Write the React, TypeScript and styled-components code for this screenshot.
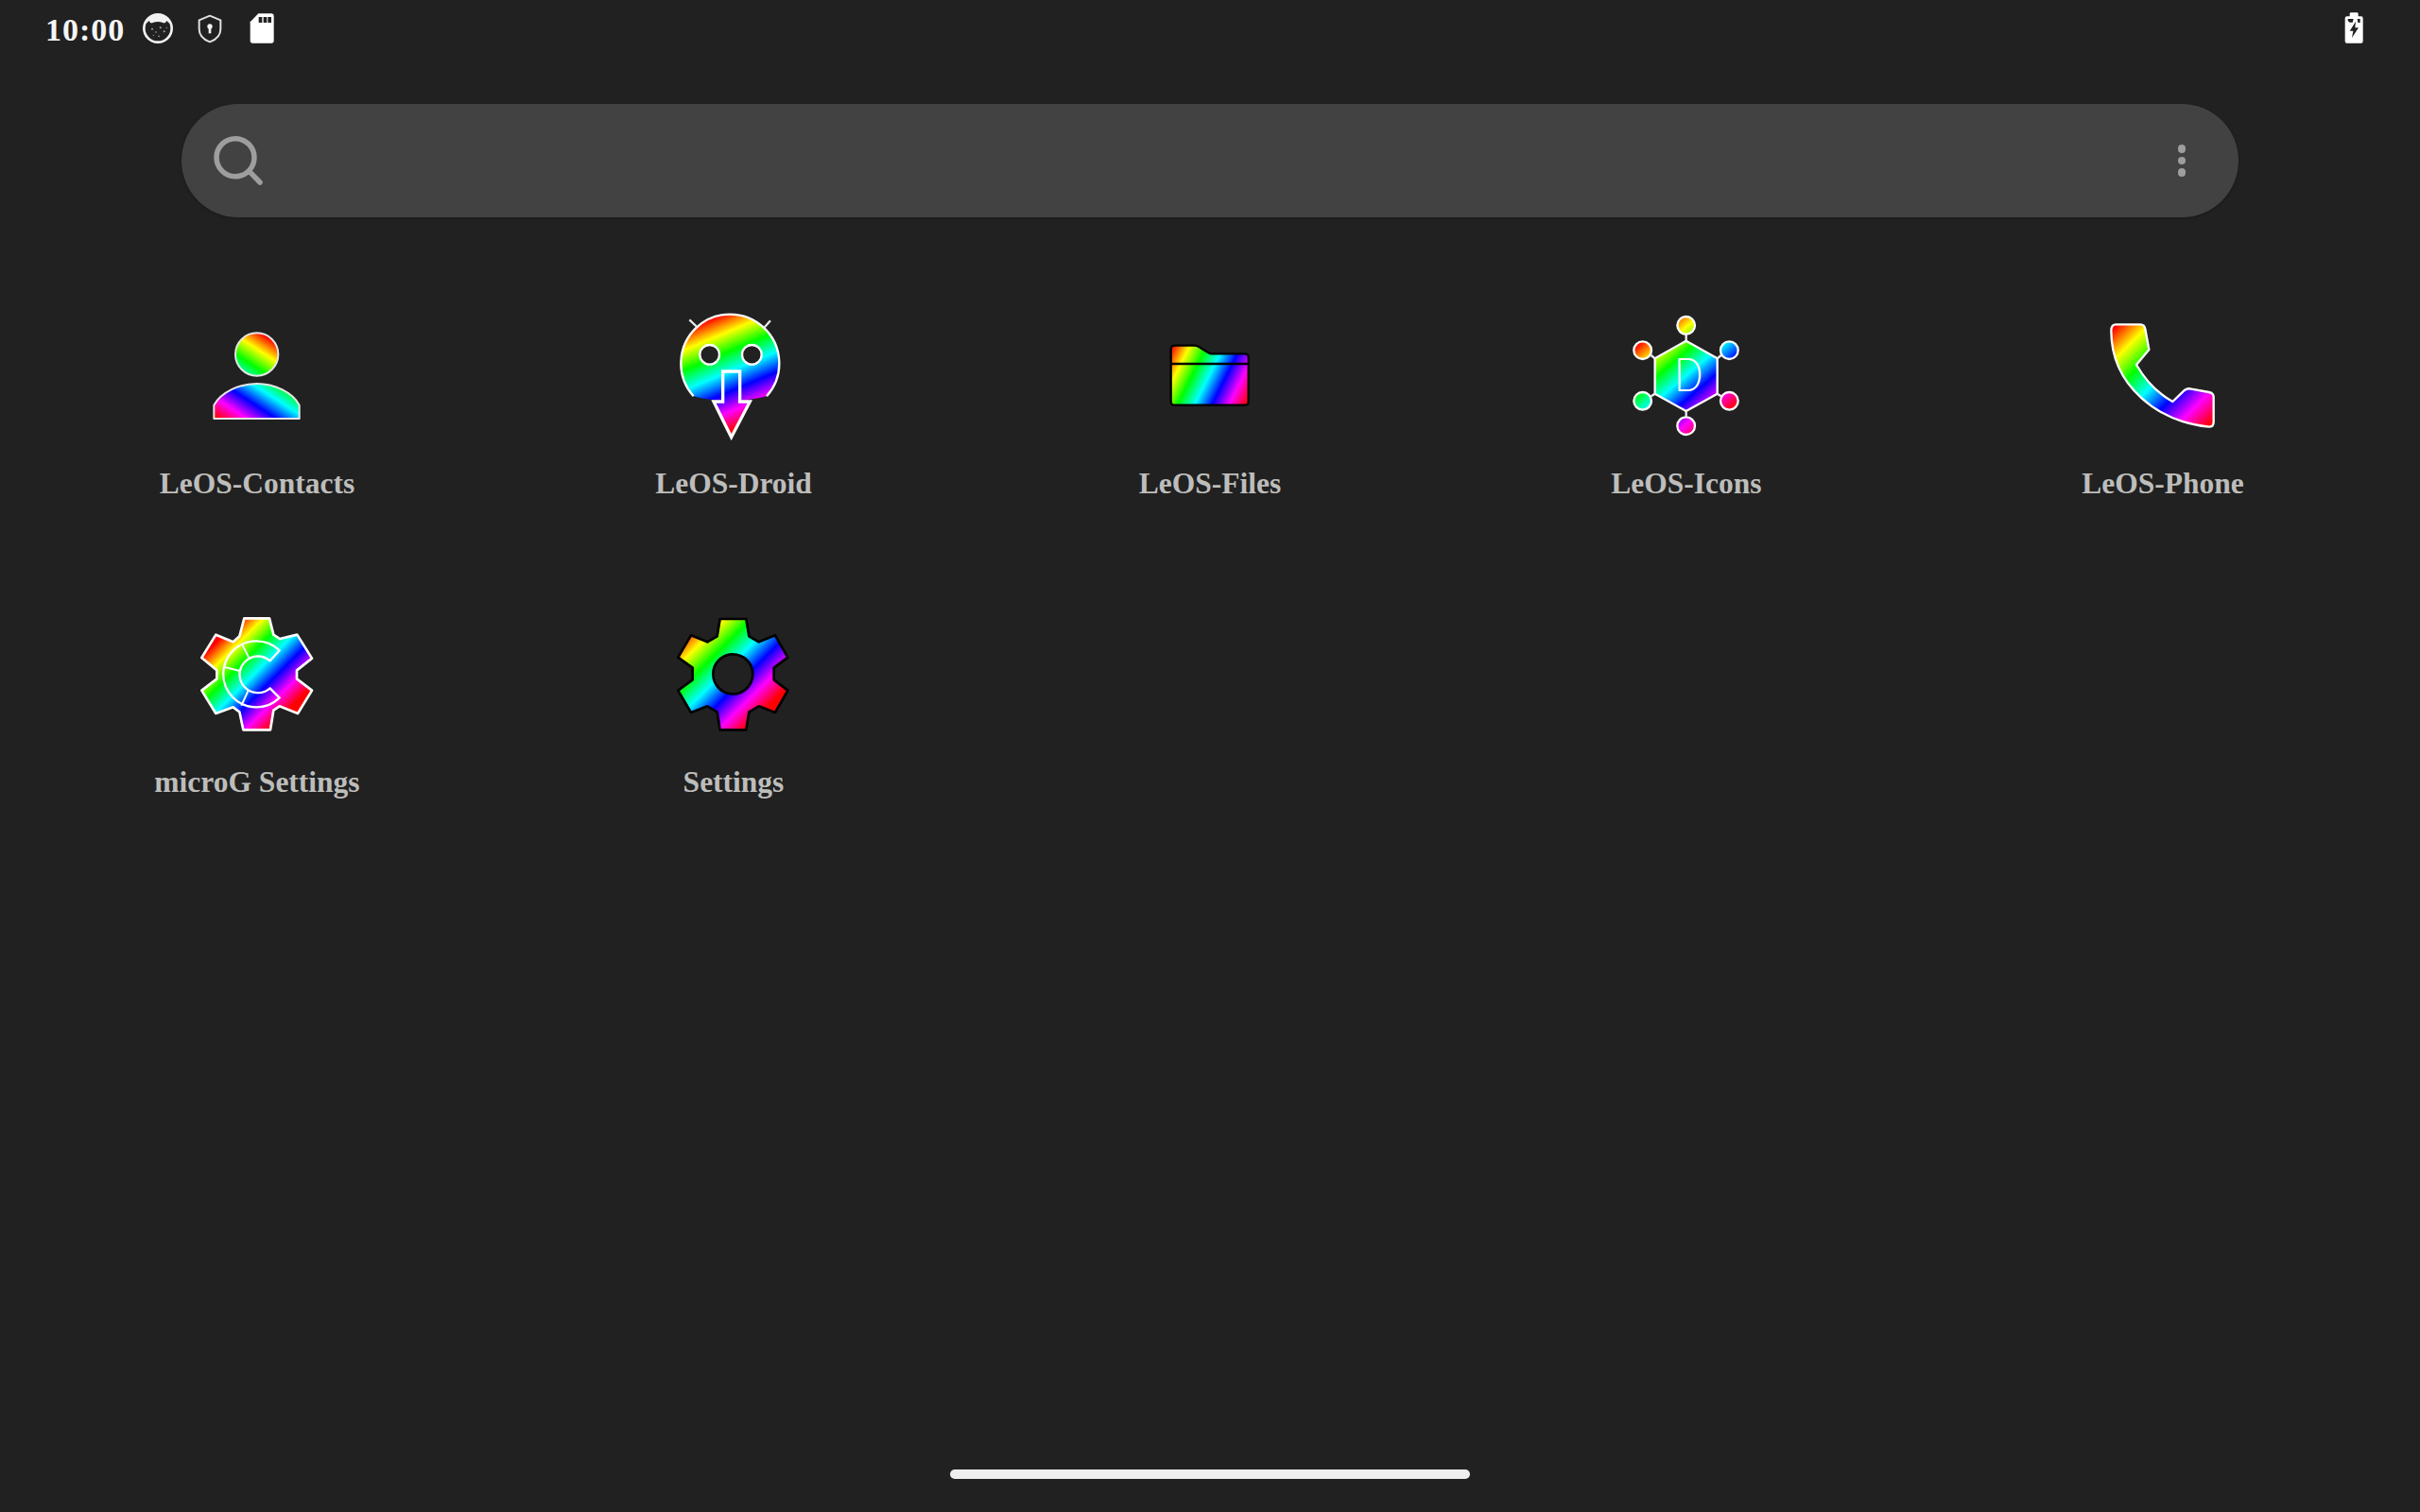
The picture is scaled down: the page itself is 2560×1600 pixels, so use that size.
import React from "react";
import styled, { createGlobalStyle } from "styled-components";

const Global = createGlobalStyle`
  html, body {
    margin: 0;
    background: #212121;
  }
`;

const HUES = ["#ff0000", "#ffff00", "#00ff00", "#00ffff", "#0000ff", "#ff00ff", "#ff0000"];

// icons are drawn in 3x units, so the 140px box has a 420 unit viewBox
function Rainbow({ id, from, to }: { id: string; from: [number, number]; to: [number, number] }) {
  return (
    <linearGradient id={id} gradientUnits="userSpaceOnUse" x1={from[0]} y1={from[1]} x2={to[0]} y2={to[1]}>
      {HUES.map((c, i) => (
        <stop key={i} offset={i / 6} stopColor={c} />
      ))}
    </linearGradient>
  );
}

function ContactsIcon() {
  return (
    <AppGlyph viewBox="126 24 420 420">
      <defs>
        <Rainbow id="contacts" from={[370, 110]} to={[205, 365]} />
      </defs>
      <g fill="url(#contacts)" stroke="#e6e6e6" strokeWidth="6">
        <circle cx="335" cy="165" r="68" />
        <path d="M199 369 V326 C222 285 280 258 335 258 C390 258 448 285 470 326 V369 Z" strokeLinejoin="round" />
      </g>
    </AppGlyph>
  );
}

function DroidIcon() {
  return (
    <AppGlyph viewBox="138 24 420 420">
      <defs>
        <Rainbow id="droid" from={[280, 50]} to={[417, 377]} />
      </defs>
      <path d="M221 298 A156 156 0 1 1 453 298 Q400 312 337 312 Q270 312 221 298 Z" fill="url(#droid)" />
      <path d="M221 298 A156 156 0 1 1 453 298" fill="none" stroke="#fff" strokeWidth="7" />
      <path d="M208 55 L232 78 M465 58 L445 80" stroke="#e8e8e8" strokeWidth="7" />
      <circle cx="272" cy="166" r="31" fill="#212121" stroke="#fff" strokeWidth="7" />
      <circle cx="406" cy="166" r="31" fill="#212121" stroke="#fff" strokeWidth="7" />
      <path
        d="M314 219 H368 V315 H400 L341 428 L285 315 H314 Z"
        fill="url(#droid)"
        stroke="#fff"
        strokeWidth="10"
        strokeLinejoin="miter"
      />
    </AppGlyph>
  );
}

function FilesIcon() {
  return (
    <AppGlyph viewBox="120 24 420 420">
      <defs>
        <Rainbow id="files" from={[205, 150]} to={[467, 281]} />
      </defs>
      <path
        d="M218 137 H280 Q288 137 296 142 L325 160 Q330 163 336 163 H440 Q452 163 452 175 V314 Q452 326 440 326 H218 Q206 326 206 314 V149 Q206 137 218 137 Z"
        fill="url(#files)"
        stroke="#000"
        strokeWidth="7"
        strokeLinejoin="round"
      />
      <path d="M206 195 H452" stroke="#000" strokeWidth="8" />
    </AppGlyph>
  );
}

const NODES = [
  [341, 73],
  [478, 152],
  [478, 313],
  [341, 392],
  [203, 313],
  [203, 152],
];

function IconsIcon() {
  return (
    <AppGlyph viewBox="132 24 420 420">
      <defs>
        <Rainbow id="icons" from={[187, 133]} to={[415, 400]} />
      </defs>
      <path
        d="M341 122 L440 178 V290 L341 345 L242 290 V178 Z"
        fill="url(#icons)"
        stroke="#fff"
        strokeWidth="7"
        strokeLinejoin="round"
      />
      <path d="M341 102 V122 M452 168 L440 178 M452 298 L440 290 M341 362 V345 M230 298 L242 290 M230 168 L242 178" stroke="#eee" strokeWidth="7" />
      {NODES.map(([x, y]) => (
        <circle key={x * y} cx={x} cy={y} r="28" fill="url(#icons)" stroke="#fff" strokeWidth="7" />
      ))}
      <DropLetter transform="translate(304 283) scale(0.82 1)">D</DropLetter>
    </AppGlyph>
  );
}

function PhoneIcon() {
  return (
    <AppGlyph viewBox="144 24 420 420">
      <defs>
        <Rainbow id="phone" from={[200, 80]} to={[505, 385]} />
      </defs>
      <path
        d="M205 70 H283 Q296 70 298 85 L310 150 L270 198 C300 250 340 290 385 315 L418 283 Q430 270 445 275 L500 285 Q515 288 515 300 V380 Q515 395 500 395 C340 380 190 265 190 90 Q190 70 205 70 Z"
        fill="url(#phone)"
        stroke="#fff"
        strokeWidth="7"
        strokeLinejoin="round"
      />
    </AppGlyph>
  );
}

function MicroGIcon() {
  return (
    <AppGlyph viewBox="156 12 420 420">
      <defs>
        <Rainbow id="microg" from={[205, 150]} to={[427, 372]} />
      </defs>
      <path
        d="M325 43 H405 L418 95 L438 108 L493 95 L540 170 L492 208 V235 L540 272 L495 345 L437 322 L418 335 L408 397 H322 L310 340 L290 325 L235 345 L190 272 L238 235 V208 L190 168 L235 95 L290 118 L310 100 Z"
        fill="url(#microg)"
        stroke="#fff"
        strokeWidth="8"
        strokeLinejoin="round"
      />
      <path
        d="M437 145 A105 105 0 1 0 437 295 L407 265 A58 58 0 1 1 407 178 Z"
        fill="none"
        stroke="#fff"
        strokeWidth="7"
        strokeLinejoin="round"
      />
      <path d="M318 125 L342 172 M260 197 L312 210 M316 320 L338 272" stroke="#fff" strokeWidth="6" />
    </AppGlyph>
  );
}

function SettingsIcon() {
  return (
    <AppGlyph viewBox="138 12 420 420">
      <defs>
        <Rainbow id="settings" from={[141, 141]} to={[390, 390]} />
      </defs>
      <path
        d="M305 45 H388 L397 100 L428 118 L480 97 L520 167 L476 200 V238 L520 272 L480 342 L428 322 L397 340 L388 397 H305 L296 340 L265 322 L213 342 L172 272 L218 238 V200 L172 167 L213 97 L265 118 L296 100 Z"
        fill="url(#settings)"
        stroke="#000"
        strokeWidth="8"
        strokeLinejoin="round"
      />
      <circle cx="346" cy="220" r="63" fill="#212121" stroke="#000" strokeWidth="8" />
    </AppGlyph>
  );
}

const APPS = [
  { name: "LeOS-Contacts", Icon: ContactsIcon },
  { name: "LeOS-Droid", Icon: DroidIcon },
  { name: "LeOS-Files", Icon: FilesIcon },
  { name: "LeOS-Icons", Icon: IconsIcon },
  { name: "LeOS-Phone", Icon: PhoneIcon },
  { name: "microG Settings", Icon: MicroGIcon },
  { name: "Settings", Icon: SettingsIcon },
];

export default function App() {
  return (
    <Screen>
      <Global />
      <StatusBar>
        <Clock>10:00</Clock>
        <StatusGlyph viewBox="442 30 120 120">
          <circle cx="502" cy="90" r="44" fill="#212121" stroke="#f2f2f2" strokeWidth="8" />
          <path d="M464 76 Q468 50 502 46 Q536 50 540 76 L530 66 Q526 76 518 72 Q502 66 486 72 Q478 76 474 66 Z" fill="#f2f2f2" />
          <g fill="#a8a8a8">
            <circle cx="484" cy="92" r="3" />
            <circle cx="496" cy="102" r="2.5" />
            <circle cx="510" cy="88" r="3" />
            <circle cx="522" cy="100" r="3" />
            <circle cx="505" cy="115" r="2.5" />
            <circle cx="488" cy="112" r="2" />
            <circle cx="530" cy="88" r="2" />
          </g>
        </StatusGlyph>
        <StatusGlyph viewBox="607 30 120 120">
          <path d="M667 50 L701 64 V92 C701 112 686 126 667 133 C648 126 633 112 633 92 V64 Z" fill="none" stroke="#e0e0e0" strokeWidth="6" strokeLinejoin="round" />
          <circle cx="667" cy="84" r="8" fill="#f2f2f2" />
          <path d="M663 86 H671 V106 H663 Z" fill="#f2f2f2" />
        </StatusGlyph>
        <StatusGlyph viewBox="772 30 120 120">
          <path
            d="M821 43 H862 Q870 43 870 51 V129 Q870 137 862 137 H803 Q795 137 795 129 V70 Z"
            fill="#fff"
          />
          <path d="M822 54 H833 V72 H822 Z M837 54 H848 V72 H837 Z M851 54 H862 V72 H851 Z" fill="#212121" />
        </StatusGlyph>
        <Spacer />
        <StatusGlyph viewBox="691 30 120 120">
          <path
            d="M738 52 V44 Q738 40 742 40 H761 Q765 40 765 44 V52 H774 Q780 52 780 58 V131 Q780 137 774 137 H729 Q723 137 723 131 V58 Q723 52 729 52 Z"
            fill="#fff"
          />
          <path d="M732 60 H750 L747 71 H738 L732 66 Z M762 60 H771 V72 H764 Z" fill="#212121" />
          <path d="M757 68 L738 98 H749 L745 120 L766 88 H755 Z" fill="#212121" />
        </StatusGlyph>
      </StatusBar>

      <SearchBar>
        <svg width="60" height="60" viewBox="0 0 60 60">
          <circle cx="25" cy="26.7" r="20" fill="none" stroke="#9e9e9e" strokeWidth="5.5" />
          <path d="M40 41.7 L51 53" stroke="#9e9e9e" strokeWidth="5.5" strokeLinecap="round" />
        </svg>
        <MenuDots>
          <span />
          <span />
          <span />
        </MenuDots>
      </SearchBar>

      <AppGrid>
        {APPS.map(({ name, Icon }) => (
          <AppCell key={name}>
            <Icon />
            <AppLabel>{name}</AppLabel>
          </AppCell>
        ))}
      </AppGrid>

      <HomePill />
    </Screen>
  );
}

const Screen = styled.div`
  width: 2560px;
  height: 1600px;
  background: #212121;
  display: flex;
  flex-direction: column;
  overflow: hidden;
`;

const StatusBar = styled.div`
  height: 60px;
  padding: 0 50px 0 48px;
  display: flex;
  align-items: center;
  gap: 15px;
`;

const Clock = styled.span`
  font-family: "Liberation Serif", serif;
  font-weight: 700;
  font-size: 34px;
  letter-spacing: 1px;
  line-height: 40px;
  padding-top: 3px;
  color: #f5f5f5;
  width: 84px;
`;

const StatusGlyph = styled.svg`
  width: 40px;
  height: 40px;
  flex: none;
`;

const Spacer = styled.div`
  flex: 1;
`;

const SearchBar = styled.div`
  margin: 50px 192px 0;
  height: 120px;
  border-radius: 60px;
  background: #424242;
  box-shadow: 0 1px 3px rgba(0, 0, 0, 0.25);
  display: flex;
  align-items: center;
  justify-content: space-between;
  padding: 0 56px 0 32px;
  box-sizing: border-box;
`;

const MenuDots = styled.div`
  display: flex;
  flex-direction: column;
  gap: 4px;
  span {
    width: 8.5px;
    height: 8.5px;
    border-radius: 50%;
    background: #9e9e9e;
  }
`;

const AppGrid = styled.div`
  margin-top: 98px;
  padding-left: 20px;
  display: grid;
  grid-template-columns: repeat(5, 504px);
  grid-auto-rows: 316px;
`;

const AppCell = styled.div`
  display: flex;
  flex-direction: column;
  align-items: center;
`;

const AppGlyph = styled.svg`
  width: 140px;
  height: 140px;
  display: block;
`;

const DropLetter = styled.text`
  font-family: Lato, sans-serif;
  font-weight: 300;
  font-size: 145px;
  fill: #fff;
`;

const AppLabel = styled.div`
  margin-top: 24px;
  font-family: "Liberation Serif", serif;
  font-weight: 700;
  font-size: 31.5px;
  line-height: 40px;
  color: #bdbdbb;
`;

const HomePill = styled.div`
  margin: auto auto 35px;
  width: 550px;
  height: 10px;
  border-radius: 5px;
  background: #eeeeee;
`;
